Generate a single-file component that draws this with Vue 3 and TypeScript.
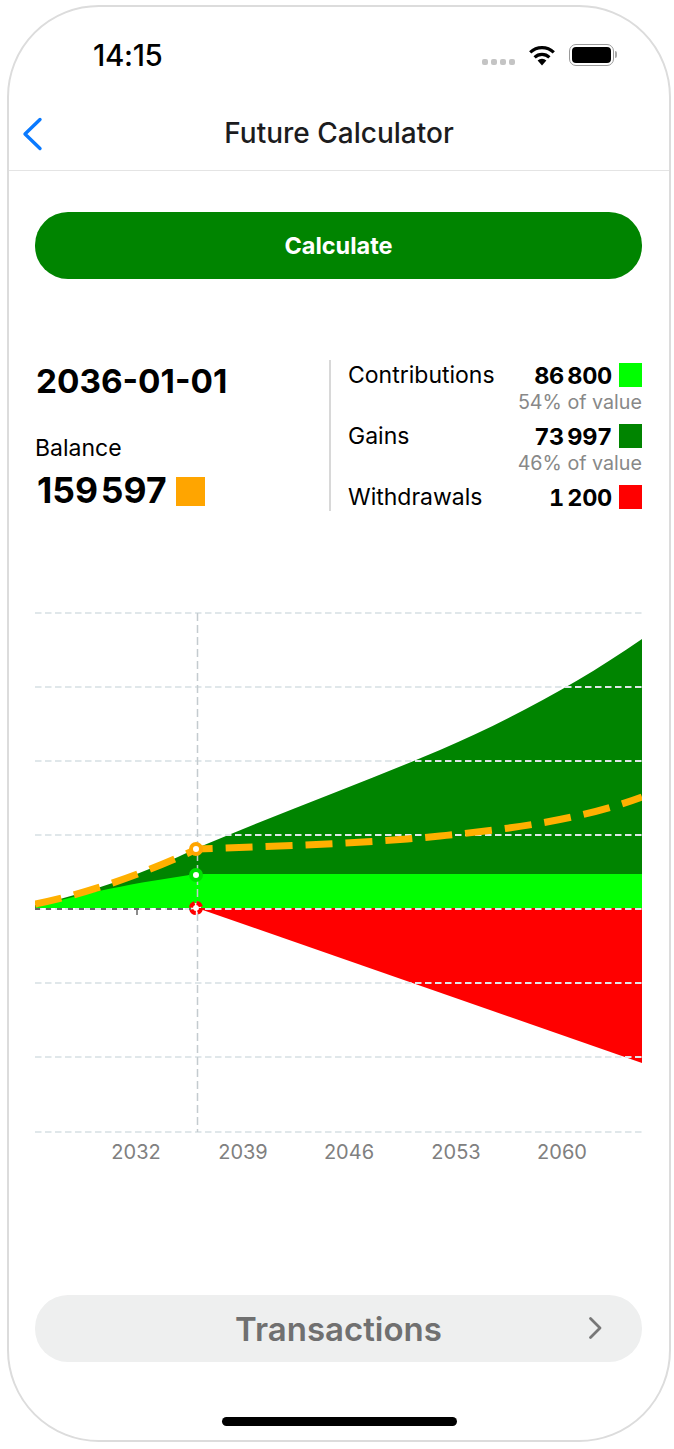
<template>
  <div class="phone">
    <div class="status-bar">
      <span class="time">14:15</span>
      <div class="status-icons">
        <div class="signal"><i v-for="n in 4" :key="n"></i></div>
        <svg class="wifi" width="28" height="21" viewBox="0 0 28 21">
          <path d="M14 20.5 9.6 15.6a6.4 6.4 0 0 1 8.8 0Z" fill="#000" />
          <path d="M6.6 12.3a10.8 10.8 0 0 1 14.8 0" fill="none" stroke="#000" stroke-width="3.2" />
          <path d="M2.2 7.4a17.2 17.2 0 0 1 23.6 0" fill="none" stroke="#000" stroke-width="3.2" />
        </svg>
        <div class="battery"><div class="battery-fill"></div></div>
      </div>
    </div>

    <header class="nav">
      <svg class="back" width="22" height="34" viewBox="0 0 22 34">
        <path d="M19 2.5 4 17l15 14.5" fill="none" stroke="#0a7aff" stroke-width="3.4" stroke-linecap="round" stroke-linejoin="round" />
      </svg>
      <h1 class="nav-title">Future Calculator</h1>
    </header>

    <main class="content">
      <button class="calc-btn">Calculate</button>

      <section class="stats">
        <div class="stats-left">
          <div class="date">2036-01-01</div>
          <div class="balance-label">Balance</div>
          <div class="balance-row">
            <span class="balance-value">159&#8202;597</span>
            <span class="swatch swatch-big" style="background: #ffa500"></span>
          </div>
        </div>
        <div class="stats-right">
          <div v-for="row in rows" :key="row.label" class="stat">
            <div class="stat-main">
              <span class="stat-label">{{ row.label }}</span>
              <span class="stat-value">{{ row.value }}</span>
              <span class="swatch" :style="{ background: row.color }"></span>
            </div>
            <div v-if="row.note" class="stat-note">{{ row.note }}</div>
          </div>
        </div>
      </section>

      <svg class="chart" width="607" height="570" viewBox="35 600 607 570">
        <path d="M35 905C90 893 145 873 197 848C280 813 360 784 440 750C510 720 580 682 642 639V874H197L35 908Z" fill="#008400" />
        <path d="M35 908C75 894 140 882 197 874H642V908H35Z" fill="#00ff00" />
        <path d="M197 908 642 1063V908Z" fill="#ff0000" />
        <line v-for="y in gridLines" :key="y" x1="35" x2="642" :y1="y" :y2="y" class="grid" />
        <line x1="35" x2="197" y1="909" y2="909" class="axis" />
        <line x1="137" x2="137" y1="910" y2="915" class="tick" />
        <line x1="197.5" x2="197.5" y1="613" y2="1132" class="cursor" />
        <path class="balance-line" d="M35 904C90 893 145 873 197 849C280 846 360 844 440 836C510 829 580 820 642 797" />
        <circle cx="196" cy="849" r="5" class="dot" stroke="#ffa500" />
        <circle cx="196" cy="875" r="5" class="dot" stroke="#00e000" />
        <circle cx="196" cy="908" r="5" class="dot dot-red" stroke="#ff0000" />
        <text v-for="t in years" :key="t.label" :x="t.x" y="1159" text-anchor="middle" class="year">{{ t.label }}</text>
      </svg>

      <button class="tx-btn">
        <span>Transactions</span>
        <svg class="tx-chevron" width="14" height="24" viewBox="0 0 14 24">
          <path d="M2.5 2.5 12 12l-9.500 9.500" fill="none" stroke="#777" stroke-width="2.800" stroke-linecap="round" stroke-linejoin="round" />
        </svg>
      </button>
    </main>

    <div class="home-indicator"></div>
  </div>
</template>

<script setup lang="ts">
interface StatRow {
  label: string;
  value: string;
  color: string;
  note?: string;
}

const rows: StatRow[] = [
  { label: 'Contributions', value: '86\u2009800', color: '#00ff00', note: '54% of value' },
  { label: 'Gains', value: '73\u2009997', color: '#008400', note: '46% of value' },
  { label: 'Withdrawals', value: '1\u2009200', color: '#ff0000' },
];

const gridLines = [613, 687, 761, 835, 909, 983, 1057, 1132];

const years = [
  { label: '2032', x: 136 },
  { label: '2039', x: 243 },
  { label: '2046', x: 349 },
  { label: '2053', x: 456 },
  { label: '2060', x: 562 },
];
</script>

<style>
html,
body {
  margin: 0;
  background: #fff;
}
</style>

<style scoped>
.phone {
  box-sizing: border-box;
  width: 664px;
  height: 1437px;
  margin: 5px 0 0 7px;
  border: 2px solid #dcdcdc;
  border-radius: 92px;
  background: #fff;
  color: #000;
  font-family: Inter, "Noto Sans", sans-serif;
  overflow: hidden;
}

.status-bar {
  display: flex;
  align-items: center;
  justify-content: space-between;
  box-sizing: border-box;
  height: 92px;
  padding: 4px 55px 0 84px;
}
.time {
  font-size: 29.5px;
  font-weight: 500;
  letter-spacing: -0.3px;
}
.status-icons {
  display: flex;
  align-items: center;
}
.signal {
  display: flex;
  gap: 3px;
  margin: 14px 13px 0 0;
}
.signal i {
  width: 6px;
  height: 6px;
  border-radius: 2px;
  background: #c4c4c4;
}
.wifi {
  margin-right: 13px;
}
.battery {
  position: relative;
  box-sizing: border-box;
  width: 45px;
  height: 22px;
  padding: 2px;
  border: 1.5px solid #9a9a9a;
  border-radius: 7px;
}
.battery::after {
  content: "";
  position: absolute;
  right: -4px;
  top: 6px;
  width: 2px;
  height: 7px;
  border-radius: 0 2px 2px 0;
  background: #aaa;
}
.battery-fill {
  height: 100%;
  border-radius: 4px;
  background: #000;
}

.nav {
  position: relative;
  display: flex;
  align-items: center;
  justify-content: center;
  height: 72px;
  border-bottom: 1px solid #e4e4e4;
  box-sizing: border-box;
}
.back {
  position: absolute;
  left: 12px;
  top: 18px;
}
.nav-title {
  margin: 0 0 4px;
  font-size: 28px;
  font-weight: 500;
  color: #1c1c1e;
}

.content {
  padding: 41px 27px 0 26px;
}
.calc-btn {
  display: block;
  width: 100%;
  height: 67px;
  border: 0;
  border-radius: 33px;
  background: #008400;
  color: #fff;
  font: 700 23.5px Inter, "Noto Sans", sans-serif;
}

.stats {
  display: flex;
  height: 151px;
  margin-top: 81px;
}
.stats-left {
  width: 294px;
  box-sizing: border-box;
}
.date {
  margin-top: 1px;
  padding-left: 1px;
  font-size: 33.3px;
  font-weight: 700;
  line-height: 40px;
}
.balance-label {
  margin-top: 32px;
  font-size: 23px;
  line-height: 30px;
}
.balance-row {
  display: flex;
  align-items: center;
  gap: 9px;
  margin-top: 8px;
  padding-left: 2px;
}
.balance-value {
  font-size: 35.5px;
  font-weight: 700;
  line-height: 40px;
}
.swatch {
  flex: none;
  width: 23px;
  height: 24px;
}
.swatch-big {
  width: 29px;
  height: 29px;
}
.stats-right {
  flex: 1;
  padding-left: 17px;
  border-left: 2px solid #d8d8d8;
}
.stat-main {
  display: flex;
  align-items: center;
  height: 30px;
}
.stat-label {
  flex: 1;
  font-size: 23px;
}
.stat-value {
  margin-right: 7px;
  font-size: 23.5px;
  font-weight: 700;
  font-variant-numeric: tabular-nums;
  letter-spacing: -0.3px;
}
.stat-note {
  height: 31px;
  color: #888;
  font-size: 19.7px;
  line-height: 24px;
  text-align: right;
}

.chart {
  display: block;
  margin-top: 89px;
}
.grid {
  stroke: #e0e7ea;
  stroke-width: 2;
  stroke-dasharray: 6.500 3.500;
}
.axis {
  stroke: #666;
  stroke-width: 2;
  stroke-dasharray: 5 6;
}
.tick {
  stroke: #666;
  stroke-width: 1.500;
}
.cursor {
  stroke: #c4cbcf;
  stroke-width: 1.500;
  stroke-dasharray: 8 4;
}
.balance-line {
  fill: none;
  stroke: #ffb000;
  stroke-width: 7;
  stroke-dasharray: 27 13;
}
.dot {
  fill: #fff;
  stroke-width: 4;
}
.dot-red {
  stroke-dasharray: 5.850 2;
}
.year {
  fill: #808080;
  font-size: 20px;
}

.tx-btn {
  position: relative;
  display: flex;
  align-items: center;
  justify-content: center;
  width: 100%;
  height: 67px;
  margin-top: 125px;
  border: 0;
  border-radius: 33px;
  background: #eeefef;
  color: #707070;
  font: 600 33px Inter, "Noto Sans", sans-serif;
}
.tx-chevron {
  position: absolute;
  right: 40px;
  top: 21px;
}

.home-indicator {
  width: 235px;
  height: 9px;
  margin: 55px auto 0;
  border-radius: 5px;
  background: #000;
}
</style>
